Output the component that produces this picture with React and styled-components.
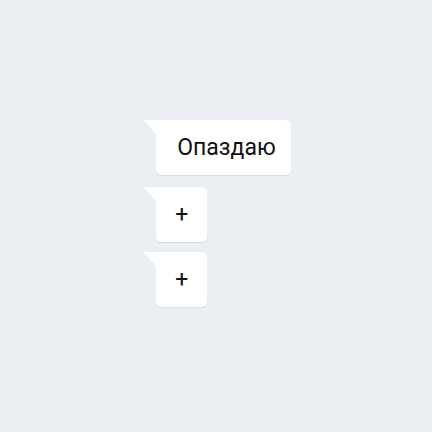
import React from 'react';
import styled, { createGlobalStyle } from 'styled-components';

const GlobalStyle = createGlobalStyle`
  html, body {
    margin: 0;
    padding: 0;
    background: #ebeff4;
  }
  body {
    font-family: Roboto, "Noto Sans", Arial, sans-serif;
  }
`;

const Page = styled.div`
  width: 432px;
  height: 432px;
  display: flex;
  align-items: center;
  justify-content: center;
`;

const Stack = styled.div`
  display: flex;
  flex-direction: column;
  align-items: flex-start;
  gap: ${(p) => p.gap || 10}px;
  padding: 0 0 5px 15px;
`;

const Bubble = styled.div`
  position: relative;
  box-sizing: border-box;
  height: 55px;
  min-width: 51px;
  padding: 0 ${(p) => (p.wide ? 15 : 0)}px 0 ${(p) => (p.wide ? 21 : 0)}px;
  display: flex;
  align-items: center;
  justify-content: center;
  background: #fff;
  border-radius: 0 5px 5px 5px;
  box-shadow: 0 1px 1px rgba(40, 60, 90, 0.1);
  font-size: 23px;
  color: #111;
  margin-top: ${(p) => p.offset || 0}px;

  &::before {
    content: '';
    position: absolute;
    left: -13px;
    top: 0;
    width: 14px;
    height: 17px;
    background: #fff;
    clip-path: path('M0 0 L14 0 L14 17 C10 10 5 5 0 0 Z');
  }
`;

export default function App() {
  return (
    <>
      <GlobalStyle />
      <Page>
        <Stack gap={10}>
          <Bubble wide>Опаздаю</Bubble>
          <Bubble offset={2}>+</Bubble>
          <Bubble>+</Bubble>
        </Stack>
      </Page>
    </>
  );
}
